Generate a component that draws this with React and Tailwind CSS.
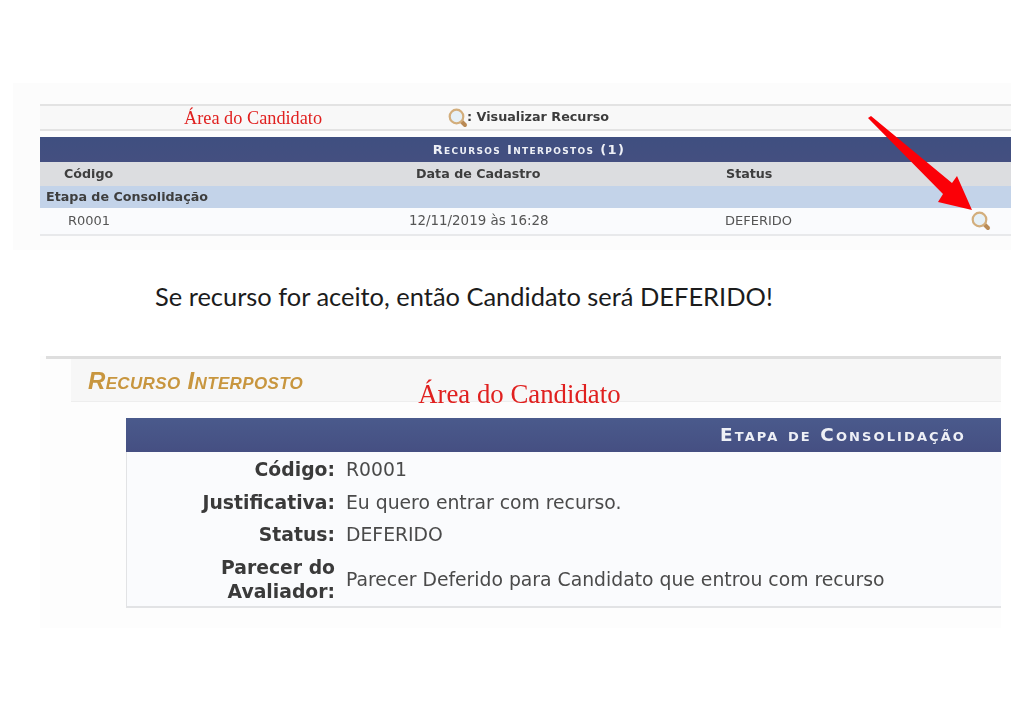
const verdana = "font-['DejaVu_Sans',sans-serif]";

function Lupa({ className }) {
  return (
    <svg viewBox="0 0 20 20" className={className}>
      <line x1="12.5" y1="12.5" x2="17" y2="17" stroke="#b98a55" strokeWidth="4" strokeLinecap="round" />
      <circle cx="8.5" cy="8.5" r="6.8" fill="#e6f0f6" stroke="#d3ae7c" strokeWidth="2.2" />
    </svg>
  );
}

function Campo({ label, children }) {
  return (
    <div className="flex items-center">
      <div className="w-[208px] shrink-0 text-right font-bold text-[#3a3a3a] leading-[24px]">{label}</div>
      <div className="ml-[11px] text-[#4a4a4a] leading-[24px]">{children}</div>
    </div>
  );
}

export default function App() {
  return (
    <div className={`relative w-[1024px] h-[725px] bg-white overflow-hidden pt-[83px] ${verdana}`}>
      {/* primeira captura */}
      <div className="ml-[13px] w-[998px] h-[167px] bg-[#fcfcfc] pl-[27px] pt-[21px] blur-[0.5px]">
        <div className="flex items-center h-[27px] border-y-2 border-[#e3e3e3] bg-[#f8f8f8]">
          <div className="w-[283px] pl-[144px] pt-[3px] font-['Liberation_Serif',serif] text-[18.3px] text-[#e0201f] whitespace-nowrap">
            Área do Candidato
          </div>
          <div className="ml-[125px] flex items-center text-[12.75px] font-bold text-[#3c3c3c]">
            <Lupa className="w-[20px] h-[20px]" />
            <span className="-ml-[1px] -mt-[2px]">: Visualizar Recurso</span>
          </div>
        </div>
        <div className="mt-[6px] h-[25px] pl-[7px] bg-gradient-to-b from-[#3f4f80] to-[#444f80] flex items-center justify-center text-[#eef0f6] font-bold text-[13px] tracking-[1.35px] [font-variant:small-caps]">
          Recursos Interpostos (1)
        </div>
        <div className="flex items-center h-[24px] bg-[#dcdde0] text-[12.7px] font-bold text-[#3e3e3e]">
          <span className="w-[376px] pl-[24px]">Código</span>
          <span className="w-[310px]">Data de Cadastro</span>
          <span>Status</span>
        </div>
        <div className="flex items-center h-[22px] bg-[#c3d3e9] pl-[6px] text-[12.7px] font-bold text-[#3e3e3e]">
          Etapa de Consolidação
        </div>
        <div className="flex items-center h-[28px] bg-[#fafbfd] border-b-2 border-[#e8e9eb] text-[13px] text-[#555]">
          <span className="w-[369px] pl-[28px]">R0001</span>
          <span className="w-[316px] text-[13.4px]">12/11/2019 às 16:28</span>
          <span className="w-[246px]">DEFERIDO</span>
          <Lupa className="w-[20px] h-[20px]" />
        </div>
      </div>

      <p className="pl-[155px] h-[106px] pt-[30px] font-['Lato',sans-serif] text-[25.45px] leading-[32px] text-[#1c1c1c] whitespace-nowrap">
        Se recurso for aceito, então Candidato será DEFERIDO!
      </p>

      {/* segunda captura */}
      <div className="ml-[40px] w-[961px] h-[272px] bg-[#fdfdfd] blur-[0.5px]">
        <div className="ml-[6px] h-[3px] bg-[#dedede]" />
        <div className="ml-[31px] h-[43px] flex bg-[#f7f7f7] border-b border-[#eeeeee]">
          <span className="ml-[17px] mt-[4px] text-[24px] font-bold italic text-[#c8963f] tracking-[0.35px] [font-variant:small-caps] font-['Liberation_Sans',sans-serif] whitespace-nowrap">
            Recurso Interposto
          </span>
          <span className="ml-[115px] mt-[18px] font-['Liberation_Serif',serif] text-[26.8px] leading-[34px] text-[#e0201f] whitespace-nowrap">
            Área do Candidato
          </span>
        </div>
        <div className="ml-[86px] mt-[16px] h-[34px] bg-gradient-to-b from-[#4a5a8c] to-[#454f82] flex items-center justify-end pr-[35px] text-[#eef0f6] font-bold text-[18.4px] tracking-[2.1px] [font-variant:small-caps]">
          Etapa de Consolidação
        </div>
        <div className="ml-[86px] h-[156px] bg-[#fafbfd] border-l border-b-2 border-[#e2e3e5] pt-[6px] text-[18.8px] flex flex-col gap-[8.5px]">
          <Campo label="Código:">R0001</Campo>
          <Campo label="Justificativa:">Eu quero entrar com recurso.</Campo>
          <Campo label="Status:">DEFERIDO</Campo>
          <Campo label={<>Parecer do<br />Avaliador:</>}>Parecer Deferido para Candidato que entrou com recurso</Campo>
        </div>
      </div>

      {/* seta vermelha por cima da tabela */}
      <svg viewBox="0 0 1024 725" className="absolute inset-0 w-[1024px] h-[725px] pointer-events-none">
        <polygon points="868,118 871,116 952,183 957,176 972,210 938,202 943,194" fill="#fb0007" />
      </svg>
    </div>
  );
}
